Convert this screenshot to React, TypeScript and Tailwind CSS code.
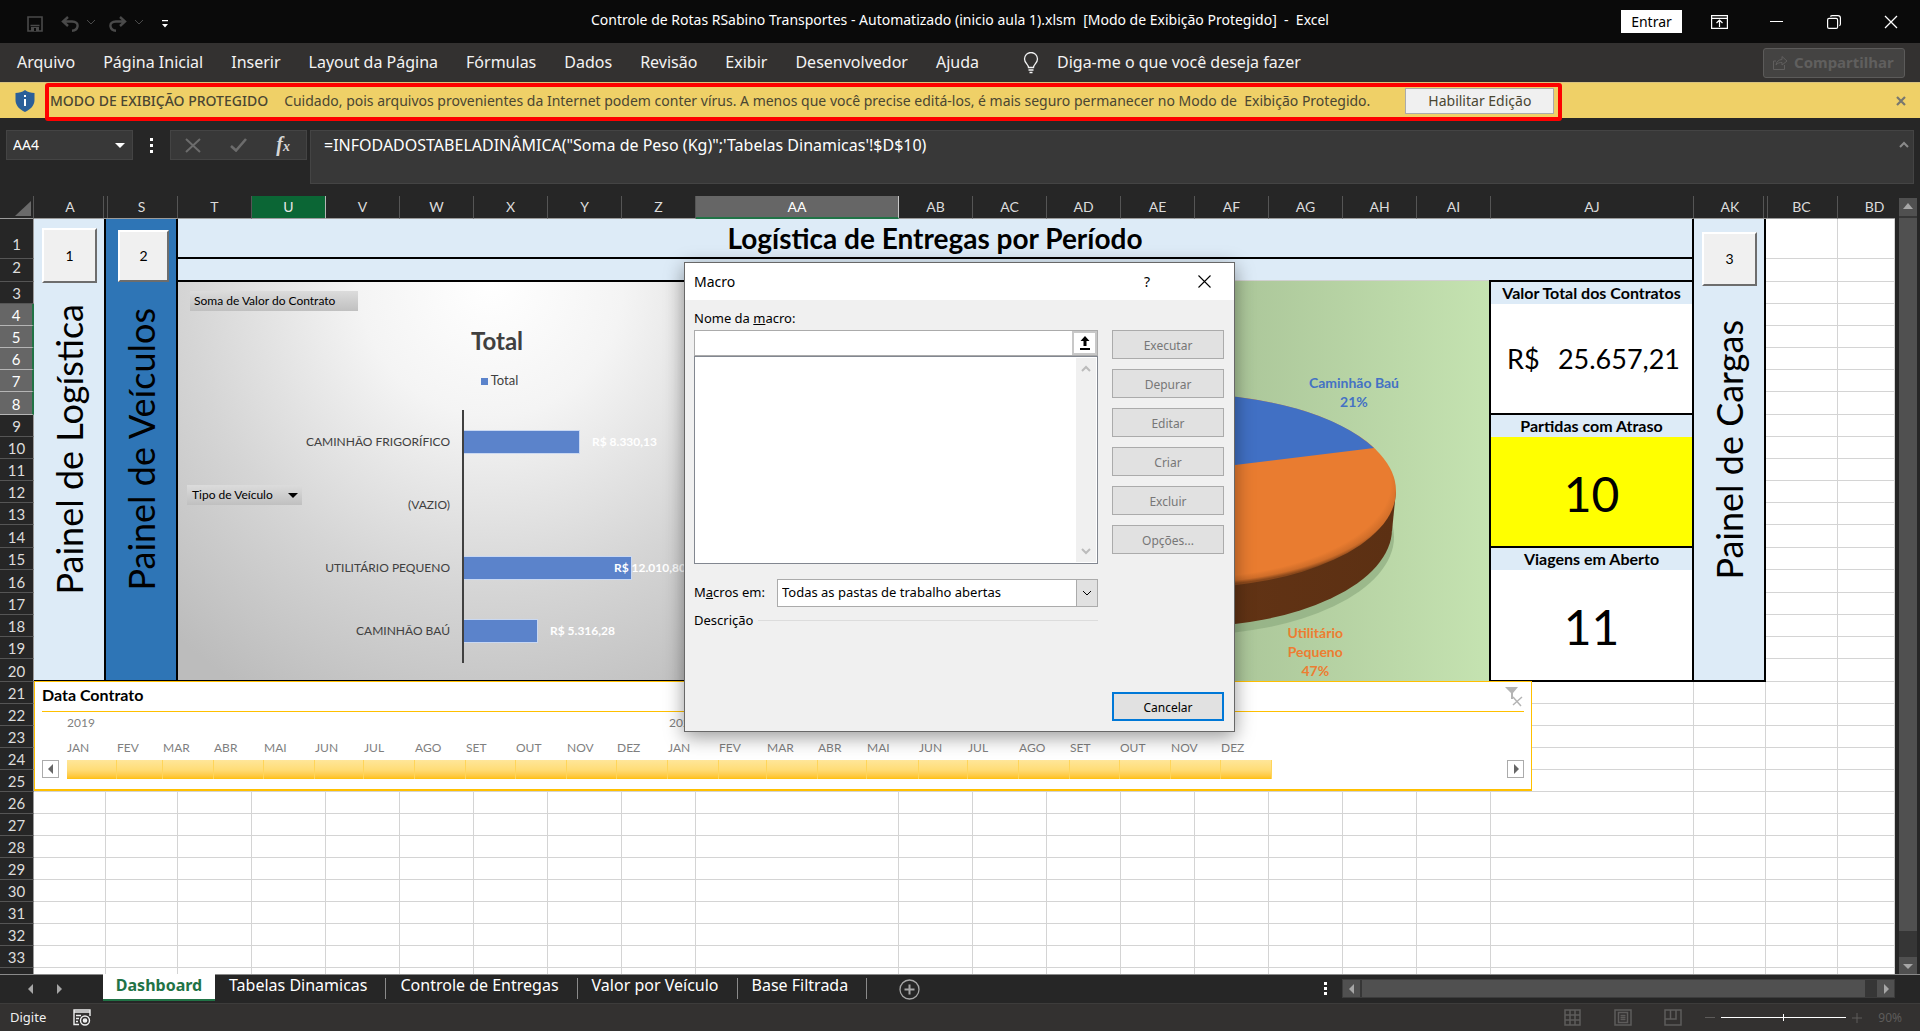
import React from 'react';

const COLS: [string, number][] = [
  ['A', 72], ['S', 72], ['T', 74], ['U', 74], ['V', 74], ['W', 74], ['X', 74], ['Y', 74],
  ['Z', 74], ['AA', 203], ['AB', 74], ['AC', 74], ['AD', 74], ['AE', 74], ['AF', 74],
  ['AG', 74], ['AH', 74], ['AI', 74], ['AJ', 203], ['AK', 72], ['BC', 72], ['BD', 57],
];

const ROWS = [
  40, 23, 22, 22, 22, 22, 22, 23, 22, 22, 22, 22, 22, 23, 22, 23, 22, 22, 22, 23,
  22, 22, 22, 22, 22, 22, 22, 22, 22, 22, 22, 22, 22, 22,
];

const MENU = [
  'Arquivo', 'Página Inicial', 'Inserir', 'Layout da Página', 'Fórmulas', 'Dados',
  'Revisão', 'Exibir', 'Desenvolvedor', 'Ajuda',
];

const BARS = [
  { name: 'CAMINHÃO FRIGORÍFICO', width: 116, value: 'R$ 8.330,13' },
  { name: '(VAZIO)', width: 0, value: '' },
  { name: 'UTILITÁRIO PEQUENO', width: 168, value: 'R$ 12.010,80' },
  { name: 'CAMINHÃO BAÚ', width: 74, value: 'R$ 5.316,28' },
];

const MONTHS: [string, number][] = [
  ['JAN', 50], ['FEV', 46], ['MAR', 51], ['ABR', 50], ['MAI', 51], ['JUN', 49],
  ['JUL', 51], ['AGO', 51], ['SET', 50], ['OUT', 51], ['NOV', 50], ['DEZ', 51],
  ['JAN', 51], ['FEV', 48], ['MAR', 51], ['ABR', 49], ['MAI', 52], ['JUN', 49],
  ['JUL', 51], ['AGO', 51], ['SET', 50], ['OUT', 51], ['NOV', 50], ['DEZ', 51],
];

const TABS = ['Tabelas Dinamicas', 'Controle de Entregas', 'Valor por Veículo', 'Base Filtrada'];

const MACRO_BUTTONS = ['Executar', 'Depurar', 'Editar', 'Criar', 'Excluir', 'Opções...'];

type Dir = 'up' | 'down' | 'left' | 'right';

const Triangle: React.FC<{ dir: Dir; className?: string }> = ({ dir, className = '' }) => {
  const points = {
    up: '0,7 10,7 5,1',
    down: '0,3 10,3 5,8',
    left: '7,0 7,10 2,5',
    right: '3,0 3,10 8,5',
  };
  return (
    <svg viewBox="0 0 10 10" className={`size-[10px] shrink-0 fill-current ${className}`}>
      <polygon points={points[dir]} />
    </svg>
  );
};

const Chevron: React.FC<{ className?: string; up?: boolean }> = ({ className = '', up }) => (
  <svg viewBox="0 0 10 10" className={`size-[10px] shrink-0 ${className}`} fill="none" stroke="currentColor">
    <path d={up ? 'M1 7l4-4 4 4' : 'M1 3l4 4 4-4'} />
  </svg>
);

const TitleBar = () => (
  <header className="grid h-[43px] shrink-0 grid-cols-[1fr_auto_1fr] bg-[#0a0a0a] text-white">
    <div className="flex items-center pl-[27px] pt-1 text-[#4a4a4a]">
      <button aria-label="Salvar">
        <svg viewBox="0 0 16 16" className="size-4" fill="none" stroke="currentColor" strokeWidth="1.6">
          <path d="M1 1h14v14H1zM3.5 9.5h9" />
          <path d="M4 15v-4h8v4" fill="currentColor" stroke="none" />
          <path d="M7 12h2v3H7z" fill="#0a0a0a" stroke="none" />
        </svg>
      </button>
      <button aria-label="Desfazer" className="ml-[18px]">
        <svg viewBox="0 0 18 16" className="h-4 w-[18px]" fill="none" stroke="currentColor" strokeWidth="2.4">
          <path d="M7 1L2 5.500l5 4.500M2 5.500h9c4 0 6 2 5.500 5-.4 2.500-2.500 4-5.500 4.200" />
        </svg>
      </button>
      <Chevron className="ml-[7px] -mt-1" />
      <button aria-label="Refazer" className="ml-[13px]">
        <svg viewBox="0 0 18 16" className="h-4 w-[18px]" fill="none" stroke="currentColor" strokeWidth="2.4">
          <path d="M11 1l5 4.500-5 4.500M16 5.500H7c-4 0-6 2-5.500 5 .4 2.500 2.500 4 5.500 4.200" />
        </svg>
      </button>
      <Chevron className="ml-[7px] -mt-1" />
      <button aria-label="Personalizar" className="ml-[17px] text-white">
        <svg viewBox="0 0 8 8" className="size-2" fill="currentColor">
          <path d="M1 0h6v1.200H1zM1 4h6L4 7.500z" />
        </svg>
      </button>
    </div>
    <h1 className="whitespace-pre pt-[9px] text-sm leading-[22px]">
      Controle de Rotas RSabino Transportes - Automatizado (inicio aula 1).xlsm  [Modo de Exibição Protegido]  -  Excel
    </h1>
    <div className="flex items-center justify-end pr-[22px]">
      <button className="h-[23px] w-[61px] bg-white text-sm leading-[22px] text-black">Entrar</button>
      <button aria-label="Opções da faixa" className="ml-[29px]">
        <svg viewBox="0 0 17 14" className="h-[14px] w-[17px]" fill="none" stroke="currentColor" strokeWidth="1.2">
          <path d="M.6.6h15.800v12.800H.6zM.6 3.400h15.800M8.500 12V5.500M5.500 8l3-3 3 3" />
        </svg>
      </button>
      <button aria-label="Minimizar" className="ml-[42px] h-3 w-[13px]">
        <span className="block h-px bg-white" />
      </button>
      <button aria-label="Restaurar" className="ml-[44px]">
        <svg viewBox="0 0 14 14" className="size-[14px]" fill="none" stroke="currentColor" strokeWidth="1.2">
          <rect x=".6" y="3.400" width="10" height="10" rx="1.500" />
          <path d="M3.400 1.500C4 .8 4.500.6 5.200.6H11c1.500 0 2.400 1 2.400 2.400v6c0 .8-.3 1.400-1 1.800" />
        </svg>
      </button>
      <button aria-label="Fechar" className="ml-[43px]">
        <svg viewBox="0 0 14 14" className="size-[14px]" stroke="currentColor" strokeWidth="1.300">
          <path d="M1 1l12 12M13 1L1 13" />
        </svg>
      </button>
    </div>
  </header>
);

const Ribbon = () => (
  <nav className="flex h-[39px] shrink-0 items-center bg-[#333130] pl-[17px] pr-[15px] text-base text-[#f3f3f3]">
    <div className="flex gap-7 pb-[2px]">
      {MENU.map(m => (
        <button key={m} className="whitespace-nowrap">{m}</button>
      ))}
    </div>
    <svg viewBox="0 0 16 22" className="ml-[44px] h-[22px] w-4" fill="none" stroke="currentColor" strokeWidth="1.300">
      <path d="M5.500 15.500c0-3-4-4.500-4-8.500a6.500 6.500 0 0113 0c0 4-4 5.500-4 8.500zM5.500 18h5M6.500 20.500h3" />
    </svg>
    <button className="ml-[18px] whitespace-nowrap pb-[2px]">Diga-me o que você deseja fazer</button>
    <button disabled className="ml-auto flex h-[30px] w-[142px] items-center gap-[6px] rounded-[3px] border border-[#5c5b5a] bg-[#444342] pl-[9px] text-[15px] font-bold text-[#605f5e]">
      <svg viewBox="0 0 15 15" className="size-[15px] shrink-0" fill="none" stroke="currentColor">
        <path d="M3 6H.5v8.500h11V10M3 10c.5-3.500 3-5.500 6-5.500V1.500l5 4.500-5 4V7.500C6.500 7.500 4.500 8 3 10z" />
      </svg>
      Compartilhar
    </button>
  </nav>
);

const ProtectedBar = () => (
  <div className="relative flex h-9 shrink-0 items-center border-t border-[#d9c27e] bg-[#efd067] pl-[15px] pr-[14px] text-sm text-[#4a4632]">
    <svg viewBox="0 0 20 22" className="h-[22px] w-5">
      <path d="M10 0c3 2.200 6 3 9.500 3v7c0 5.500-4 9.500-9.500 12C4.500 19.500.5 15.500.5 10V3C4 3 7 2.200 10 0z" fill="#2b5f99" />
      <path d="M9 5h2v2H9zM9 9h2v7H9z" fill="#fff" />
    </svg>
    <span className="ml-[15px] whitespace-nowrap font-medium">MODO DE EXIBIÇÃO PROTEGIDO</span>
    <span className="ml-4 whitespace-pre">
      Cuidado, pois arquivos provenientes da Internet podem conter vírus. A menos que você precise editá-los, é mais seguro permanecer no Modo de  Exibição Protegido.
    </span>
    <button className="ml-[35px] h-[26px] w-[149px] shrink-0 border border-[#ababab] bg-[#f0f0f0]">Habilitar Edição</button>
    <button aria-label="Fechar aviso" className="ml-auto text-[#77776f]">
      <svg viewBox="0 0 10 10" className="size-[10px]" stroke="currentColor" strokeWidth="2.200">
        <path d="M1 1l8 8M9 1L1 9" />
      </svg>
    </button>
    {/* marcação vermelha do tutorial */}
    <div className="pointer-events-none absolute left-[45px] top-0 z-10 h-[38px] w-[1517px] rounded-[3px] border-4 border-[#fe0000]" />
  </div>
);

const FormulaBar = () => (
  <div className="flex h-[78px] shrink-0 items-start bg-[#262626] pl-[6px] pr-[6px] pt-3 text-[15px] text-white">
    <div className="flex h-[30px] w-[127px] items-center border border-[#444] bg-[#383838] pl-[6px] pr-[7px]">
      <input aria-label="Caixa de nome" defaultValue="AA4" className="w-0 flex-1 bg-transparent text-sm outline-none" />
      <Triangle dir="down" />
    </div>
    <div className="ml-[17px] flex h-[30px] w-1 flex-col justify-center gap-[3px]">
      <i className="size-[3px] bg-white" />
      <i className="size-[3px] bg-white" />
      <i className="size-[3px] bg-white" />
    </div>
    <div className="ml-4 flex h-[30px] w-[137px] items-center justify-between border border-[#444] bg-[#383838] pl-[14px] pr-4 text-[#6c6c6c]">
      <svg viewBox="0 0 16 16" className="size-4" stroke="currentColor" strokeWidth="2">
        <path d="M1 2l14 13M15 2L1 15" />
      </svg>
      <svg viewBox="0 0 17 14" className="h-[14px] w-[17px]" fill="none" stroke="currentColor" strokeWidth="2.600">
        <path d="M1 8l5 4.500L16 1" />
      </svg>
      <span className="font-['Liberation_Serif',serif] text-xl font-bold italic leading-5 text-[#d6d6d6]">
        f<small className="text-sm">x</small>
      </span>
    </div>
    <div className="ml-[3px] flex h-[54px] flex-1 border border-[#444] bg-[#383838] pl-[13px] pr-1 pt-[3px]">
      <textarea
        aria-label="Barra de fórmulas"
        className="h-10 flex-1 resize-none bg-transparent text-base leading-[22px] outline-none"
        defaultValue={'=INFODADOSTABELADINÂMICA("Soma de Peso (Kg)";\'Tabelas Dinamicas\'!$D$10)'}
      />
      <Chevron up className="mt-[6px] stroke-2 text-[#8a8a8a]" />
    </div>
  </div>
);

const BarChart = () => (
  <div className="relative h-[398px] w-[627px] shrink-0 bg-[radial-gradient(ellipse_75%_120%_at_50%_0%,#ffffff_0%,#f4f4f4_28%,#d5d5d5_65%,#bcbcbc_100%)] text-[#404040]">
    <button className="absolute left-3 top-[9px] h-5 w-[168px] bg-gradient-to-b from-[#dcdcdc] to-[#c0c0c0] pl-1 text-left text-xs leading-5 text-black">
      Soma de Valor do Contrato
    </button>
    <div className="flex flex-col items-center pt-[43px]">
      <h3 className="pl-[11px] text-2xl font-bold leading-8">Total</h3>
      <div className="mt-[15px] flex h-[18px] items-center gap-[3px] pl-4 text-[13px]">
        <i className="size-[7px] bg-[#5b83cb]" />
        Total
      </div>
    </div>
    <div className="mt-5 flex h-[253px]">
      <div className="flex w-[286px] flex-col border-r-2 border-[#404040] pr-3 text-right text-xs">
        {BARS.map(b => (
          <div key={b.name} className="flex flex-1 items-center justify-end">{b.name}</div>
        ))}
      </div>
      <div className="flex flex-col text-xs font-bold text-white">
        {BARS.map((b, i) => (
          <div key={b.name} className="flex flex-1 items-center">
            <i
              className={b.width ? 'h-6 border border-l-0 border-[#c9d8f2] bg-[#5b83cb]' : ''}
              style={{ width: b.width }}
            />
            <span className={i === 2 ? '-ml-[18px]' : 'ml-3'}>{b.value}</span>
          </div>
        ))}
      </div>
    </div>
    <button className="absolute left-[9px] top-[203px] flex h-5 w-[115px] items-center justify-between bg-gradient-to-b from-[#dcdcdc] to-[#c0c0c0] pl-[5px] pr-1 text-xs text-black">
      Tipo de Veículo
      <Triangle dir="down" />
    </button>
  </div>
);

const PieChart = () => (
  <div className="relative -mt-[2px] h-[401px] flex-1 border-t border-[#d0d0d0] bg-gradient-to-r from-[#c5e3b1] via-[#a3bd92] to-[#c5e3b1] text-sm font-bold leading-[19px]">
    <svg viewBox="0 0 256 400" className="absolute right-0 top-0 h-[400px] w-[256px]">
      <defs>
        <linearGradient id="side" x1="0" x2="1" y1="0" y2="0">
          <stop offset="0" stopColor="#6b3817" />
          <stop offset="1" stopColor="#5c3013" />
        </linearGradient>
        <radialGradient id="top" cx="0.5" cy="0.46" r="0.53">
          <stop offset="0.92" stopColor="#e97c30" />
          <stop offset="0.97" stopColor="#cf6d29" />
          <stop offset="1" stopColor="#8a481b" />
        </radialGradient>
      </defs>
      <ellipse cx="-45" cy="256" rx="206" ry="98" fill="#8fac80" opacity="0.7" />
      <ellipse cx="-48" cy="248" rx="207" ry="98" fill="url(#side)" />
      <path d="M-259 210H163L159 250H-255z" fill="url(#side)" />
      <ellipse cx="-48" cy="210" rx="211" ry="97" fill="url(#top)" />
      <path d="M-48 190L141 167A211 97 0 00-48 113z" fill="#4170c4" />
    </svg>
    <p className="absolute right-[90px] top-[92px] text-center text-[#4472c4]">
      Caminhão Baú
      <br />
      21%
    </p>
    <p className="absolute right-[146px] top-[342px] text-center text-[#ed7d31]">
      Utilitário
      <br />
      Pequeno
      <br />
      47%
    </p>
  </div>
);

const PanelButton: React.FC<{ n: number; className: string }> = ({ n, className }) => (
  <button className={`absolute border-2 border-b-[#6d6d6d] border-l-white border-r-[#6d6d6d] border-t-white bg-[#f0f0f0] text-sm text-black ${className}`}>
    {n}
  </button>
);

const VerticalTitle: React.FC<{ children: string }> = ({ children }) => (
  <div className="flex h-[459px] items-center justify-center">
    <span className="rotate-180 whitespace-nowrap text-4xl leading-none text-black [writing-mode:vertical-rl]">{children}</span>
  </div>
);

const colHeadClass = (c: string) => {
  if (c === 'U') return 'border-b border-r border-b-[#9b9b9b] border-r-[#b5b5b5] bg-[#0b6635] text-[#e8e8e8]';
  if (c === 'AA') return 'border-b-2 border-r border-b-[#217346] border-r-[#c8c8c8] bg-[#666] text-white';
  if (c === 'A' || c === 'AK')
    return "relative border-b border-[#9b9b9b] after:absolute after:right-[2px] after:top-0 after:h-full after:w-px after:bg-[#555]";
  if (c === 'S' || c === 'BC')
    return "relative border-b border-r border-b-[#9b9b9b] border-r-[#555] before:absolute before:left-px before:top-0 before:h-full before:w-px before:bg-[#555]";
  if (c === 'BD') return 'border-b border-[#9b9b9b] pl-4';
  return 'border-b border-r border-b-[#9b9b9b] border-r-[#555]';
};

const rowHeadClass = (row: number) => {
  if (row >= 4 && row <= 8) return 'border-r-2 border-b-[#b5b5b5] border-r-[#217346] bg-[#666] leading-5 text-white';
  if (row <= 2) return 'border-r border-b-[#555] border-r-[#9b9b9b] bg-[#262626] pb-[6px] leading-4 text-[#dcdcdc]';
  return 'border-r border-b-[#555] border-r-[#9b9b9b] bg-[#262626] leading-5 text-[#dcdcdc]';
};

const label = 'border-r-2 border-black bg-[#ddebf7] p-0 text-center text-base font-bold leading-none text-black';
const kpi = 'border-b-2 border-r-2 border-black p-0 text-black';
const grid = 'border-b border-r border-[#d4d4d4] p-0';

const PanelCells: React.FC<{ row: number }> = ({ row }) => (
  <>
    {row === 1 && (
      <>
        <td rowSpan={20} className="relative border-b-2 border-r-2 border-black bg-[#ddebf7] p-0">
          <VerticalTitle>Painel de Logística</VerticalTitle>
          <PanelButton n={1} className="left-2 top-[9px] h-[55px] w-[55px]" />
        </td>
        <td rowSpan={20} className="relative border-b-2 border-r-2 border-black bg-[#2e75b6] p-0">
          <VerticalTitle>Painel de Veículos</VerticalTitle>
          <PanelButton n={2} className="left-3 top-[11px] h-[52px] w-[51px]" />
        </td>
        <td colSpan={17} className="border-b-2 border-r-2 border-black bg-[#ddebf7] p-0 text-center text-[28px] font-bold leading-8 text-black">
          Logística de Entregas por Período
        </td>
        <td rowSpan={20} className="relative border-b-2 border-r-2 border-black bg-[#ddebf7] p-0">
          <VerticalTitle>Painel de Cargas</VerticalTitle>
          <PanelButton n={3} className="left-2 top-[13px] h-[54px] w-[55px]" />
        </td>
      </>
    )}
    {row === 2 && <td colSpan={17} className="border-b-2 border-r-2 border-black bg-[#ddebf7] p-0" />}
    {row === 3 && (
      <>
        <td rowSpan={18} colSpan={16} className="border-b-2 border-r-2 border-black p-0 align-top">
          <div className="flex h-[398px]">
            <BarChart />
            <PieChart />
          </div>
        </td>
        <td className={label}>Valor Total dos Contratos</td>
      </>
    )}
    {row === 4 && (
      <td rowSpan={5} className={`${kpi} bg-white`}>
        <div className="flex justify-between pl-4 pr-3 text-[27px] leading-8">
          <span>R$</span>
          <span>25.657,21</span>
        </div>
      </td>
    )}
    {row === 9 && <td className={label}>Partidas com Atraso</td>}
    {row === 10 && (
      <td rowSpan={5} className={`${kpi} bg-[#ffff00] pt-1 text-center text-5xl leading-none`}>10</td>
    )}
    {row === 15 && <td className={label}>Viagens em Aberto</td>}
    {row === 16 && <td rowSpan={5} className={`${kpi} bg-white pt-1 text-center text-5xl leading-none`}>11</td>}
  </>
);

const Sheet = () => (
  <table className="w-[1895px] shrink-0 table-fixed border-separate border-spacing-0 bg-white">
    <colgroup>
      <col style={{ width: 34 }} />
      {COLS.map(([c, w]) => (
        <col key={c} style={{ width: w }} />
      ))}
    </colgroup>
    <thead>
      <tr className="h-[23px] bg-[#262626] text-sm leading-none text-[#dcdcdc]">
        <th className="border-b border-r border-[#555] border-b-[#9b9b9b] p-0">
          <svg viewBox="0 0 16 16" className="ml-[15px] mt-1 size-4 fill-[#6a6a6a]">
            <polygon points="16,0 16,15 0,15" />
          </svg>
        </th>
        {COLS.map(([c]) => (
          <th key={c} className={`p-0 font-normal ${colHeadClass(c)}`}>{c}</th>
        ))}
      </tr>
    </thead>
    <tbody>
      {ROWS.map((h, i) => {
        const row = i + 1;
        const free = row <= 20 ? ['BC', 'BD'] : COLS.map(c => c[0]);
        return (
          <tr key={row} style={{ height: h }}>
            <th className={`border-b p-0 align-bottom text-[15px] font-normal ${rowHeadClass(row)}`}>
              {/* a última linha fica só parcialmente visível */}
              {row < ROWS.length && row}
            </th>
            {row <= 20 && <PanelCells row={row} />}
            {free.map(c => (
              <td key={c} className={grid} />
            ))}
          </tr>
        );
      })}
    </tbody>
  </table>
);

const Timeline = () => (
  <section className="absolute left-[34px] top-[485px] h-[110px] w-[1498px] border border-b-2 border-[#ffc000] bg-white px-[7px]">
    <div className="flex h-[30px] items-start justify-between border-b border-[#ffc000] pt-[3px]">
      <h2 className="text-base font-bold leading-5 text-black">Data Contrato</h2>
      <svg viewBox="0 0 18 20" className="mr-px mt-[2px] h-5 w-[18px]" fill="#b4b4b4" stroke="#b4b4b4">
        <path d="M0 0h13L8 6v6H6V6z" stroke="none" />
        <path d="M8 10l8 9M17 10l-9 8" strokeWidth="1.500" />
      </svg>
    </div>
    <div className="flex pl-[25px] pt-[2px] text-xs leading-[18px] text-[#7f7f7f]">
      <span className="w-[602px]">2019</span>
      <span>2020</span>
    </div>
    <div className="flex pl-[25px] pt-[6px] text-xs leading-5 text-[#7f7f7f]">
      {MONTHS.map(([m, w], i) => (
        <span key={i} className="shrink-0" style={{ width: w }}>{m}</span>
      ))}
    </div>
    <div className="mt-[2px] flex items-start">
      <button aria-label="Anterior" className="mr-2 flex h-[18px] w-[17px] items-center justify-center border border-[#ababab] text-[#666]">
        <Triangle dir="left" />
      </button>
      {MONTHS.map(([, w], i) => (
        <i
          key={i}
          className="h-[19px] shrink-0 border-r border-[#ffd55a] bg-gradient-to-b from-[#ffe699] via-[#ffdd78] to-[#ffc000]"
          style={{ width: w }}
        />
      ))}
      <button aria-label="Próximo" className="ml-auto flex h-[18px] w-[17px] items-center justify-center border border-[#ababab] text-[#666]">
        <Triangle dir="right" />
      </button>
    </div>
  </section>
);

const VerticalScroll = () => (
  <div className="flex flex-1 justify-center pt-[2px]">
    <div className="flex w-[18px] flex-col bg-[#363636] text-[#a6a6a6]">
      <button aria-label="Rolar para cima" className="flex h-[18px] items-center justify-center bg-[#505050]">
        <Triangle dir="up" />
      </button>
      <div className="mb-[26px] mt-[2px] flex-1 bg-[#505050]" />
      <button aria-label="Rolar para baixo" className="flex h-[17px] items-center justify-center bg-[#505050]">
        <Triangle dir="down" />
      </button>
    </div>
  </div>
);

const SheetTabs = () => (
  <div className="flex h-[29px] shrink-0 items-start border-t border-[#8a8a8a] bg-[#262626] text-base text-white">
    <div className="flex h-[27px] w-[103px] shrink-0 items-center gap-[18px] pl-[26px] text-[#a6a6a6]">
      <Triangle dir="left" />
      <Triangle dir="right" />
    </div>
    <button className="-mt-px flex h-[27px] w-[112px] justify-center border-b-2 border-[#217346] bg-white text-base font-bold leading-[22px] text-[#217346]">
      Dashboard
    </button>
    {TABS.map(t => (
      <button key={t} className="flex h-[26px] whitespace-nowrap pl-[14px] leading-[21px]">
        {t}
        <i className="ml-[18px] mt-[3px] h-[21px] w-px bg-[#8a8a8a]" />
      </button>
    ))}
    <button aria-label="Nova planilha" className="ml-8 mt-1 text-[#a6a6a6]">
      <svg viewBox="0 0 21 21" className="size-[21px]" fill="none" stroke="currentColor" strokeWidth="1.300">
        <circle cx="10.500" cy="10.500" r="9.500" />
        <path d="M10.500 5.500v10M5.500 10.500h10" strokeWidth="2" />
      </svg>
    </button>
    <div className="ml-auto flex h-[27px] flex-col justify-center gap-[2px] pr-[15px]">
      <i className="size-[3px] bg-white" />
      <i className="size-[3px] bg-white" />
      <i className="size-[3px] bg-white" />
    </div>
    <div className="mr-[25px] mt-1 flex h-[19px] w-[553px] border border-[#3c3c3c] bg-[#363636] text-[#a6a6a6]">
      <button aria-label="Rolar para a esquerda" className="flex w-[17px] items-center justify-center bg-[#505050]">
        <Triangle dir="left" />
      </button>
      <div className="ml-[2px] mr-3 flex-1 bg-[#505050]" />
      <button aria-label="Rolar para a direita" className="flex w-[17px] items-center justify-center bg-[#505050]">
        <Triangle dir="right" />
      </button>
    </div>
  </div>
);

const StatusBar = () => (
  <footer className="flex h-7 shrink-0 items-center border-t border-[#3d3c3b] bg-[#333130] pl-[10px] pr-[18px] text-[13px] text-[#f0f0f0]">
    <span>Digite</span>
    <svg viewBox="0 0 18 17" className="ml-[27px] h-[17px] w-[18px]" fill="none" stroke="currentColor" strokeWidth="1.400">
      <path d="M6 15.500H1V1h16v6M1 3h16M3 6.500h5M3 9.500h3M3 12.500h2" />
      <circle cx="12" cy="11.500" r="4.500" />
      <circle cx="12" cy="11.500" r="1.600" fill="currentColor" />
    </svg>
    <div className="ml-auto flex items-center text-xs text-[#5e5c5b]">
      <svg viewBox="0 0 17 17" className="size-[17px]" fill="none" stroke="currentColor" strokeWidth="1.500">
        <path d="M1 1h15v15H1zM1 6h15M1 11h15M6 1v15M11 1v15" />
      </svg>
      <svg viewBox="0 0 18 17" className="ml-[33px] h-[17px] w-[18px]" fill="none" stroke="currentColor" strokeWidth="1.500">
        <path d="M1 1h16v15H1zM4.500 3.500h9v10h-9zM6.500 6.500h5M6.500 8.500h5M6.500 10.500h5" />
      </svg>
      <svg viewBox="0 0 18 17" className="ml-8 h-[17px] w-[18px]" fill="none" stroke="currentColor" strokeWidth="1.500">
        <path d="M1 1h16v15H1zM1 10h11V1M6.500 1v9" />
      </svg>
      <button aria-label="Menos zoom" className="ml-[23px] h-px w-[10px] bg-[#5e5c5b]" />
      <input
        type="range"
        aria-label="Zoom"
        defaultValue={50}
        className="ml-[6px] h-[9px] w-[125px] appearance-none bg-[linear-gradient(#fff,#fff)] bg-[length:100%_1px] bg-center bg-no-repeat [&::-webkit-slider-thumb]:h-[7px] [&::-webkit-slider-thumb]:w-px [&::-webkit-slider-thumb]:appearance-none [&::-webkit-slider-thumb]:bg-white"
      />
      <svg viewBox="0 0 10 10" className="ml-[6px] size-[10px]" stroke="currentColor">
        <path d="M5 0v10M0 5h10" />
      </svg>
      <span className="ml-4">90%</span>
    </div>
  </footer>
);

const MacroDialog = () => (
  <div className="pointer-events-none absolute inset-x-0 top-[262px] z-20 flex justify-center pr-px">
    <div
      role="dialog"
      aria-label="Macro"
      className="pointer-events-auto flex h-[470px] w-[551px] flex-col border border-[#686868] bg-[#f0f0f0] text-[13px] text-black shadow-[0_5px_18px_rgba(0,0,0,0.4)]"
    >
      <div className="flex h-[37px] items-center bg-white pl-[9px] pr-[23px] text-sm">
        <span>Macro</span>
        <button className="ml-auto" aria-label="Ajuda">?</button>
        <button className="ml-12" aria-label="Fechar">
          <svg viewBox="0 0 13 13" className="size-[13px]" stroke="currentColor" strokeWidth="1.100">
            <path d="M.5.500l12 12M12.500.500l-12 12" />
          </svg>
        </button>
      </div>
      <div className="flex flex-1 gap-[14px] pl-[9px] pr-[10px]">
        <div className="flex-1 pt-2">
          <label htmlFor="macro-name" className="block leading-5">
            Nome da <u>m</u>acro:
          </label>
          <div className="mt-[2px] flex h-[26px] border border-[#ababab] bg-white">
            <input id="macro-name" className="w-0 flex-1 px-1 outline-none" />
            <button aria-label="Expandir" className="flex w-[25px] items-center justify-center border-2 border-[#c8c8c8] bg-white">
              <svg viewBox="0 0 10 14" className="h-[14px] w-[10px]" fill="#000">
                <path d="M5 0l4.500 5H6.500v5h-3V5H.5zM0 12h10v2H0z" />
              </svg>
            </button>
          </div>
          <div className="flex h-[208px] justify-end border border-[#828790] bg-white p-px">
            <div className="flex w-5 flex-col items-center justify-between bg-[#f0f0f0] py-[6px] text-[#bcbcbc]">
              <Chevron up className="stroke-2" />
              <Chevron className="stroke-2" />
            </div>
          </div>
          <div className="mt-[15px] flex h-7 items-center justify-between">
            <label htmlFor="macro-in">
              M<u>a</u>cros em:
            </label>
            <div className="relative h-7 w-[321px]">
              <select id="macro-in" className="size-full appearance-none border border-[#ababab] bg-white pl-1">
                <option>Todas as pastas de trabalho abertas</option>
              </select>
              <span className="pointer-events-none absolute right-0 top-0 flex h-7 w-[22px] items-center justify-center border border-[#ababab] bg-[#e1e1e1]">
                <Chevron />
              </span>
            </div>
          </div>
          <div className="mt-[3px] flex items-center gap-[5px] leading-5">
            Descrição
            <i className="h-px flex-1 bg-[#dcdcdc]" />
          </div>
        </div>
        <div className="flex w-[112px] flex-col gap-[10px] pb-[10px] pt-[30px] text-xs">
          {MACRO_BUTTONS.map(b => (
            <button key={b} disabled className="h-[29px] border border-[#ababab] bg-[#e1e1e1] pt-[2px] text-[#777]">{b}</button>
          ))}
          <button className="mt-auto h-[29px] border-2 border-[#0078d7] bg-[#e1e1e1] pt-[2px]">Cancelar</button>
        </div>
      </div>
    </div>
  </div>
);

export default function App() {
  return (
    <div className="relative flex h-screen w-full flex-col overflow-hidden bg-[#262626] font-['Noto_Sans','Open_Sans',sans-serif]">
      <TitleBar />
      <Ribbon />
      <ProtectedBar />
      <FormulaBar />
      <main className="relative flex min-h-0 flex-1 items-stretch overflow-hidden font-['Lato','Noto_Sans',sans-serif]">
        <div className="self-start">
          <Sheet />
        </div>
        <Timeline />
        <VerticalScroll />
      </main>
      <SheetTabs />
      <StatusBar />
      <MacroDialog />
    </div>
  );
}
